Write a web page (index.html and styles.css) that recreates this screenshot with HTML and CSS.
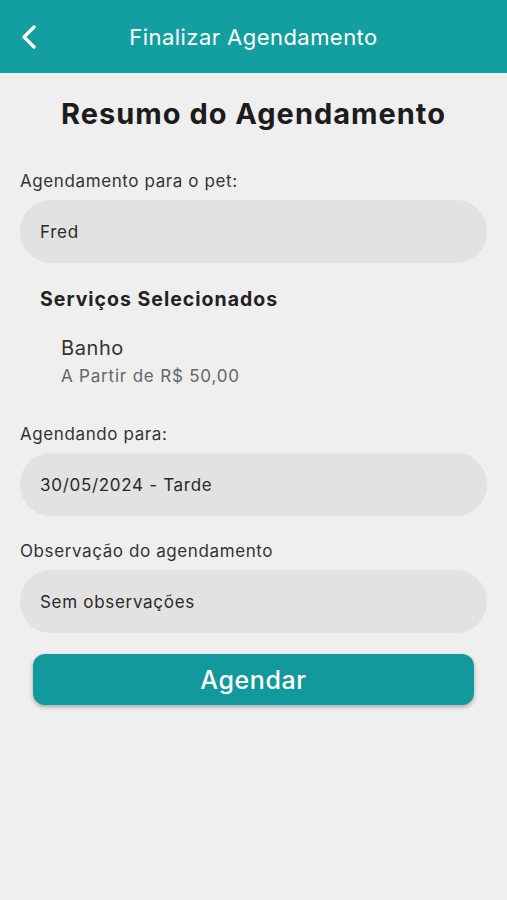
FILE: index.html
```html
<!DOCTYPE html>
<html>
<head>
<meta charset="utf-8">
<meta name="viewport" content="width=device-width, initial-scale=1">
<title>Finalizar Agendamento</title>
<link rel="stylesheet" href="styles.css">
</head>
<body>
	<!-- cabeçalho -->
	<div class="topbar">
		<a class="back" href="#">
			<svg width="16" height="24" viewBox="0 0 16 24"><path d="M13 2 L3 12 L13 22" fill="none" stroke="#fff" stroke-width="3.2" stroke-linecap="round" stroke-linejoin="round"/></svg>
		</a>
		<h1>Finalizar Agendamento</h1>
	</div>

	<div class="content">
		<h2>Resumo do Agendamento</h2>

		<div class="label">Agendamento para o pet:</div>
		<div class="field">Fred</div>

		<div class="services">
			<h3>Serviços Selecionados</h3>
			<div class="service">
				<div class="service-name">Banho</div>
				<div class="service-price">A Partir de R$ 50,00</div>
			</div>
		</div>

		<div class="label">Agendando para:</div>
		<div class="field">30/05/2024 - Tarde</div>

		<div class="label">Observação do agendamento</div>
		<div class="field">Sem observações</div>

		<button class="btn-agendar">Agendar</button>
	</div>
</body>
</html>
```
FILE: styles.css
```css
/* estilos */
*{margin:0;padding:0;box-sizing:border-box;}
body{
	background:#efefef;
	color:#222;
	font-family:Inter,"Noto Sans",sans-serif;
	width:507px;
	min-height:900px;
}

.topbar{
	height:73px;
	background:#139e9f;
	display:flex;
	align-items:center;
	justify-content:center;
	position:relative;
}
.topbar .back{
	position:absolute;
	left:21px;
	top:25px;
	display:block;
}
.topbar h1{
	color:#fff;
	font-size:22px;
	font-weight:400;
	letter-spacing:0.45px;
}

.content{
	padding:0 20px;
	display:flex;
	flex-direction:column;
}
.content h2{
	text-align:center;
	font-size:29px;
	font-weight:700;
	color:#1c1c1c;
	margin-top:22px;
	line-height:38px;
	letter-spacing:1px;
}
.label{
	font-size:17px;
	color:#333;
	line-height:22px;
	letter-spacing:0.6px;
}
.content h2 + .label{margin-top:37px;}
.field{
	height:63px;
	border-radius:31px;
	background:#e2e2e2;
	display:flex;
	align-items:center;
	padding:0 20px;
	font-size:17px;
	color:#2a2a2a;
	letter-spacing:0.7px;
	margin-top:8px;
	margin-bottom:24px;
}

.services{
	padding:0 20px;
	margin-top:-1px;
	margin-bottom:36px;
}
.services h3{
	font-size:19.5px;
	font-weight:700;
	color:#222;
	line-height:26px;
	letter-spacing:1px;
}
.service{
	padding:0 21px;
	margin-top:23px;
}
.service-name{
	font-size:20px;
	color:#333;
	line-height:26px;
	letter-spacing:0.6px;
}
.service-price{
	font-size:17px;
	color:#666;
	line-height:22px;
	margin-top:4px;
	letter-spacing:0.8px;
}

.btn-agendar{
	margin:-3px 13px 0;
	height:51px;
	border:0;
	border-radius:12px;
	background:#11999b;
	color:#fff;
	font-family:inherit;
	font-size:25px;
	font-weight:500;
	letter-spacing:0.6px;
	box-shadow:0 2px 4px rgba(0,0,0,0.3);
	cursor:pointer;
}
```
